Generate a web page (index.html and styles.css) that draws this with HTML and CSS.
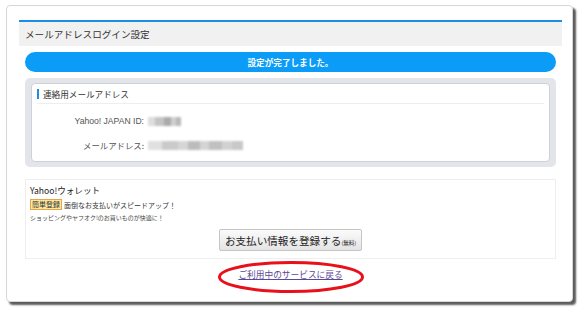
FILE: index.html
```html
<!DOCTYPE html>
<html lang="ja">
<head>
<meta charset="utf-8">
<link rel="stylesheet" href="styles.css">
</head>
<body>
<div class="card">
  <div class="section">
    <div class="section-head">メールアドレスログイン設定</div>
    <div class="section-body">
      <div class="notice">設定が完了しました。</div>
      <div class="contact">
        <div class="contact-inner">
          <div class="contact-title"><span class="bar"></span>連絡用メールアドレス</div>
          <div class="rows">
            <div class="row"><span class="label">Yahoo! JAPAN ID:</span><span class="blur blur-id"></span></div>
            <div class="row"><span class="label jp">メールアドレス:</span><span class="blur blur-mail"></span></div>
          </div>
        </div>
      </div>
      <div class="wallet">
        <div class="wallet-title">Yahoo!ウォレット</div>
        <div class="wallet-lead"><span class="badge">簡単登録</span>面倒なお支払いがスピードアップ！</div>
        <div class="wallet-small">ショッピングやヤフオク!のお買いものが快適に！</div>
        <div class="wallet-btn-row"><button class="btn">お支払い情報を登録する<small>(無料)</small></button></div>
      </div>
      <div class="back">
        <a class="back-link" href="#">ご利用中のサービスに戻る</a>
        <svg class="ring" width="148" height="34" viewBox="0 0 148 34"><ellipse cx="74" cy="17" rx="71.5" ry="14.5" fill="none" stroke="#e8101a" stroke-width="3"/></svg>
      </div>
    </div>
  </div>
</div>
</body>
</html>
```
FILE: styles.css
```css
html, body { margin: 0; padding: 0; background: #fff; }
body {
  font-family: "Noto Sans CJK JP", "Liberation Sans", sans-serif;
  color: #333;
  width: 586px;
  height: 315px;
  overflow: hidden;
}
.card {
  margin: 5px 0 0 6px;
  width: 567px;
  height: 297px;
  border: 1px solid #d6d6d6;
  border-radius: 4px;
  background: #fff;
  box-shadow: 3px 3px 2px rgba(50,50,50,0.8);
  padding: 14px 10px 0 12px;
  box-sizing: border-box;
}
.section { border-top: 2px solid #1c8fe3; }
.section-head {
  background: #f1f1f1;
  height: 24px;
  line-height: 24px;
  font-size: 9.6px;
  padding-left: 6px;
  color: #333;
}
.section-body { padding: 6px 6px 0 6px; }
.notice {
  height: 20px;
  line-height: 20px;
  border-radius: 10px;
  background: #0a9cf7;
  color: #fff;
  text-align: center;
  font-size: 8.6px;
  font-weight: bold;
}
.contact {
  margin-top: 6px;
  background: #e3e5ea;
  border-radius: 5px;
  padding: 5px 6px 5px 6px;
}
.contact-inner {
  background: #fff;
  border: 1px solid #cdd1d8;
  border-radius: 4px;
  height: 77px;
}
.contact-title {
  display: flex;
  align-items: center;
  height: 19px;
  margin: 0 5px;
  border-bottom: 1px solid #eeeeee;
  font-size: 8.6px;
  color: #333;
}
.bar {
  width: 2px;
  height: 10px;
  background: #1c8fe3;
  margin-right: 4px;
}
.rows { padding-top: 11px; display: flex; flex-direction: column; gap: 12px; }
.row { display: flex; align-items: center; height: 12px; }
.label {
  width: 112px;
  text-align: right;
  font-family: "Liberation Sans", sans-serif;
  font-size: 8.6px;
  color: #555;
}
.label.jp { font-family: "Noto Sans CJK JP", sans-serif; font-size: 8.4px; }
.blur {
  height: 9px;
  margin-left: 4px;
  filter: blur(1px);
}
.blur-id {
  width: 33px;
  background: linear-gradient(90deg, #ddd 0 20%, #c4c4c4 20% 50%, #aaa 50% 70%, #d0d0d0 70% 85%, #b9b9b9 85%);
}
.blur-mail {
  width: 95px;
  background: linear-gradient(90deg, #e0e0e0 0 15%, #cacaca 15% 32%, #d6d6d6 32% 42%, #bcbcbc 42% 55%, #d4d4d4 55% 64%, #c0c0c0 64% 78%, #d2d2d2 78% 88%, #c8c8c8 88%);
}
.wallet {
  margin-top: 12px;
  border: 1px solid #eeeeee;
  height: 80px;
  box-sizing: border-box;
  padding: 5px 4px 0 4px;
}
.wallet-title { font-size: 8.6px; line-height: 11px; color: #222; }
.wallet-lead {
  display: flex;
  align-items: center;
  font-size: 7px;
  margin-top: 3px;
  color: #333;
}
.badge {
  background: #fde9a2;
  border: 1px solid #e9a444;
  font-size: 7px;
  line-height: 9px;
  padding: 0 1px;
  margin-right: 2px;
  color: #333;
}
.wallet-small { font-size: 6px; margin-top: 3px; color: #444; }
.wallet-btn-row { display: flex; justify-content: center; margin-top: 7px; }
.btn {
  height: 22px;
  width: 143px;
  padding: 0;
  border: 1px solid #c5c5c5;
  border-radius: 2px;
  background: linear-gradient(#fbfbfb, #e4e4e4);
  font-family: "Noto Sans CJK JP", sans-serif;
  font-size: 10.6px;
  color: #222;
}
.btn small { font-size: 5.5px; }
.back {
  position: relative;
  display: flex;
  justify-content: center;
  margin-top: 10px;
}
.back-link {
  font-size: 8.7px;
  color: #5a4996;
  text-decoration: underline;
  line-height: 12px;
}
.ring {
  position: absolute;
  left: 50%;
  top: -9px;
  margin-left: -74px;
}
```
